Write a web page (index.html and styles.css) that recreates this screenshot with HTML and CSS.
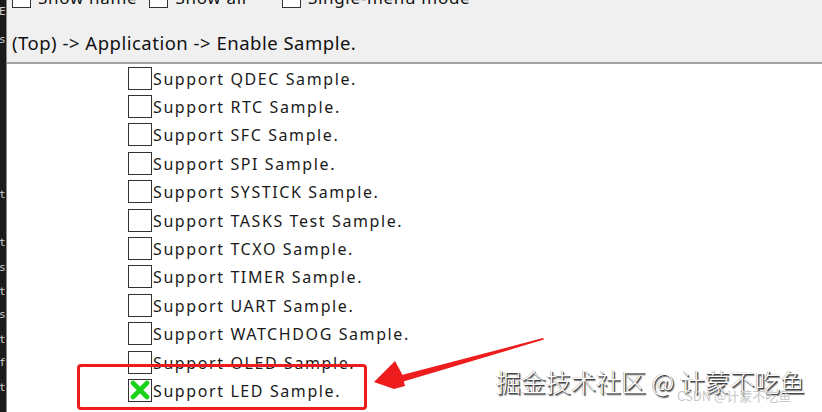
FILE: index.html
```html
<!DOCTYPE html>
<html lang="zh">
<head>
<meta charset="utf-8">
<title>Enable Sample</title>
<link rel="stylesheet" href="styles.css">
</head>
<body>
<div class="screen">
  <div class="strip">
    <span class="sl sl-e">E</span>
    <span class="sl sl-s">s</span>
    <span class="sl sl-1">t</span>
    <span class="sl sl-2">t</span>
    <span class="sl sl-3">s</span>
    <span class="sl sl-4">t</span>
    <span class="sl sl-5">s</span>
    <span class="sl sl-6">t</span>
    <span class="sl sl-7">f</span>
    <span class="sl sl-8">t</span>
  </div>
  <div class="main">
    <div class="toolbar">
      <div class="opts">
        <label class="opt"><span class="tbox"></span>Show name</label>
        <label class="opt"><span class="tbox"></span>Show all</label>
        <label class="opt opt-wide"><span class="tbox"></span>Single-menu mode</label>
      </div>
      <div class="path">(Top) -&gt; Application -&gt; Enable Sample.</div>
    </div>
    <div class="list">
      <div class="row"><span class="cb"></span><span class="lbl">Support QDEC Sample.</span></div>
      <div class="row"><span class="cb"></span><span class="lbl">Support RTC Sample.</span></div>
      <div class="row"><span class="cb"></span><span class="lbl">Support SFC Sample.</span></div>
      <div class="row"><span class="cb"></span><span class="lbl">Support SPI Sample.</span></div>
      <div class="row"><span class="cb"></span><span class="lbl">Support SYSTICK Sample.</span></div>
      <div class="row"><span class="cb"></span><span class="lbl">Support TASKS Test Sample.</span></div>
      <div class="row"><span class="cb"></span><span class="lbl">Support TCXO Sample.</span></div>
      <div class="row"><span class="cb"></span><span class="lbl">Support TIMER Sample.</span></div>
      <div class="row"><span class="cb"></span><span class="lbl">Support UART Sample.</span></div>
      <div class="row"><span class="cb"></span><span class="lbl">Support WATCHDOG Sample.</span></div>
      <div class="row"><span class="cb"></span><span class="lbl">Support OLED Sample.</span></div>
      <div class="row"><span class="cb cb-on"><svg viewBox="0 0 20 20" width="20" height="20"><path d="M3 3 L17 17 M17 3 L3 17" stroke="#19d219" stroke-width="4.6" stroke-linecap="round"/></svg></span><span class="lbl">Support LED Sample.</span></div>
    </div>
  </div>

  <div class="redbox"></div>
  <svg class="arrow" viewBox="0 0 180 60" width="180" height="60">
    <polygon points="169,2 170,3.5 26,46.5 24,40" fill="#ee1c1c"/>
    <polygon points="0,46 21,25 28,38 31,50 20,53" fill="#ee1c1c"/>
  </svg>
  <div class="wm">掘金技术社区 @ 计蒙不吃鱼</div>
  <div class="csdn">CSDN @计蒙不吃鱼</div>
</div>
</body>
</html>
```
FILE: styles.css
```css
html, body {
  margin: 0;
  padding: 0;
}
body {
  width: 822px;
  height: 412px;
  overflow: hidden;
  background: #ffffff;
  font-family: "Noto Sans", "Open Sans", "Noto Sans CJK SC", sans-serif;
  color: #1a1a1a;
}
.screen {
  position: relative;
  display: flex;
  width: 822px;
  height: 412px;
  overflow: hidden;
}
.strip {
  width: 6px;
  flex: 0 0 6px;
  background: #1b1b1b;
  display: flex;
  flex-direction: column;
  overflow: hidden;
  border-right: 1px solid #8a8a8a;
}
.sl {
  display: block;
  height: 10px;
  font-size: 11px;
  line-height: 10px;
  color: #cfcfcf;
  font-family: "DejaVu Sans Mono", monospace;
  margin-left: -1px;
}
.sl-e { margin-top: 7px; }
.sl-s { margin-top: 18px; }
.sl-1 { margin-top: 145px; }
.sl-2 { margin-top: 38px; }
.sl-3 { margin-top: 15px; }
.sl-4 { margin-top: 14px; }
.sl-5 { margin-top: 13px; }
.sl-6 { margin-top: 15px; }
.sl-7 { margin-top: 13px; }
.sl-8 { margin-top: 15px; }

.main {
  flex: 1;
  display: flex;
  flex-direction: column;
}
.toolbar {
  background: #f0f0f0;
  border-bottom: 2px solid #a3a3a3;
  box-sizing: border-box;
  height: 64px;
}
.opts {
  display: flex;
  margin-top: -14px;
  padding-left: 5px;
  height: 22px;
  align-items: flex-end;
}
.opt {
  display: flex;
  align-items: flex-end;
  font-size: 17px;
  line-height: 20px;
  letter-spacing: 0.7px;
  color: #111;
  margin-right: 12px;
}
.opt-wide { margin-left: 23px; }
.tbox {
  width: 19px;
  height: 19px;
  border: 1.5px solid #333;
  background: #fff;
  margin-right: 7px;
  box-sizing: border-box;
  flex: 0 0 auto;
}
.path {
  margin-top: 23px;
  padding-left: 5px;
  font-size: 18.5px;
  line-height: 24px;
  color: #111;
  letter-spacing: 0.5px;
}

.list {
  flex: 1;
  background: #ffffff;
  padding-top: 0;
  padding-left: 121px;
}
.row {
  height: 28.4px;
  display: flex;
  align-items: center;
}
.cb {
  width: 24px;
  height: 23px;
  box-sizing: border-box;
  border: 1.5px solid #333;
  background: #fff;
  flex: 0 0 auto;
  display: flex;
  align-items: center;
  justify-content: center;
}
.lbl {
  font-size: 16px;
  line-height: 20px;
  letter-spacing: 1.6px;
  color: #1a1a1a;
  margin-left: 1px;
  margin-top: 1px;
}

.redbox {
  position: absolute;
  left: 77px;
  top: 364px;
  width: 290px;
  height: 46px;
  box-sizing: border-box;
  border: 3px solid #ec1c1c;
  border-radius: 4px;
}
.arrow {
  position: absolute;
  left: 374px;
  top: 336px;
}
.wm {
  position: absolute;
  left: 496px;
  top: 364px;
  font-family: "Noto Sans CJK SC", sans-serif;
  font-size: 25px;
  line-height: 34px;
  font-weight: 300;
  color: #ffffff;
  text-shadow: 1px 1px 0 #444, 1.5px 1.5px 1px #777, -0.5px -0.5px 0 #999;
}
.csdn {
  position: absolute;
  left: 677px;
  top: 387px;
  font-family: "Noto Sans CJK SC", sans-serif;
  font-size: 13px;
  line-height: 18px;
  color: #c8c8c8;
}
```
